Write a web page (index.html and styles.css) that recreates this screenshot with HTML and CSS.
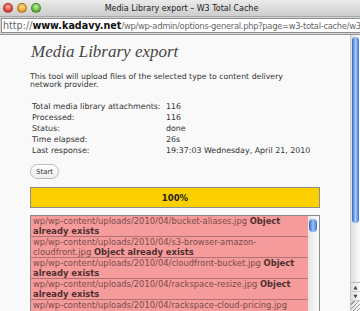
FILE: index.html
```html
<!DOCTYPE html>
<html lang="en">
<head>
  <meta charset="UTF-8">
  <title>Media Library export - W3 Total Cache</title>
  <link rel="stylesheet" href="styles.css">
</head>
<body>
  <div class="window">
    <div class="titlebar">
      <div class="lights">
        <span class="light red"></span>
        <span class="light yellow"></span>
        <span class="light green"></span>
      </div>
      <div class="title">Media Library export – W3 Total Cache</div>
    </div>

    <div class="urlbar">
      <div class="url"><span class="dim">http://</span><b>www.kadavy.net</b><span class="dim path">/wp/wp-admin/options-general.php?page=w3-total-cache/w3-tc</span></div>
    </div>

    <div class="viewport">
      <div class="page">
        <h2>Media Library export</h2>

        <p class="intro">This tool will upload files of the selected type to content delivery network provider.</p>

        <table class="stats">
          <tr><td>Total media library attachments:</td><td>116</td></tr>
          <tr><td>Processed:</td><td>116</td></tr>
          <tr><td>Status:</td><td>done</td></tr>
          <tr><td>Time elapsed:</td><td>26s</td></tr>
          <tr><td>Last response:</td><td>19:37:03 Wednesday, April 21, 2010</td></tr>
        </table>

        <button class="start">Start</button>

        <div class="progress"><span>100%</span></div>

        <div class="log">
          <div class="log-items">
            <div class="log-item">wp/wp-content/uploads/2010/04/bucket-aliases.jpg <b>Object already exists</b></div>
            <div class="log-item">wp/wp-content/uploads/2010/04/s3-browser-amazon-cloudfront.jpg <b>Object already exists</b></div>
            <div class="log-item">wp/wp-content/uploads/2010/04/cloudfront-bucket.jpg <b>Object already exists</b></div>
            <div class="log-item">wp/wp-content/uploads/2010/04/rackspace-resize.jpg <b>Object already exists</b></div>
            <div class="log-item">wp/wp-content/uploads/2010/04/rackspace-cloud-pricing.jpg <b>Object already exists</b></div>
          </div>
          <div class="log-scroll"><span class="mini-thumb"></span></div>
        </div>
      </div>

      <div class="vscroll">
        <div class="track"><span class="thumb"></span></div>
        <div class="arrows">
          <span class="arrow">&#9650;</span>
          <span class="arrow">&#9660;</span>
        </div>
        <div class="grip"></div>
      </div>
    </div>
  </div>
</body>
</html>
```

FILE: styles.css
```css
body {
  margin: 0;
  overflow: hidden;
  font-family: 'DejaVu Sans', Verdana, sans-serif;
  background: #f9f9f9;
}

.window {
  width: 360px;
  height: 311px;
  display: flex;
  flex-direction: column;
  overflow: hidden;
}

.titlebar {
  height: 16px;
  display: flex;
  align-items: center;
  background: linear-gradient(#ebebeb, #cdcdcd);
  border-bottom: 1px solid #a8a8a8;
}

.lights {
  display: flex;
  gap: 4px;
  padding-left: 3px;
}

.light {
  width: 8px;
  height: 8px;
  border-radius: 50%;
  border: 1px solid rgba(0, 0, 0, 0.25);
}

.red { background: radial-gradient(circle at 50% 35%, #ffb3a8, #e0443a 60%, #b02c24); }
.yellow { background: radial-gradient(circle at 50% 35%, #ffe0a0, #e9a22a 60%, #b97a12); }
.green { background: radial-gradient(circle at 50% 35%, #c8f3a8, #5fb83a 60%, #3a8a22); }

.title {
  flex: 1;
  text-align: center;
  font-size: 8px;
  color: #222;
  margin-right: 38px;
}

.urlbar {
  height: 16px;
  padding: 1px 0 0 1px;
  background: #d4d4d4;
}

.url {
  height: 13px;
  background: #fff;
  border: 1px solid #8e8e8e;
  border-right: none;
  font-size: 9.6px;
  line-height: 13px;
  padding-left: 1px;
  white-space: nowrap;
  overflow: hidden;
  color: #111;
}

.url .dim {
  color: #666;
}

.url .path {
  font-size: 8.4px;
  letter-spacing: -0.3px;
}

.viewport {
  flex: 1;
  display: flex;
  border-top: 1px solid #9a9a9a;
  min-height: 0;
}

.page {
  flex: 1;
  padding: 0 30px;
  overflow: hidden;
  color: #333;
}

h2 {
  font-family: 'Liberation Serif', 'DejaVu Serif', serif;
  font-style: italic;
  font-weight: normal;
  font-size: 17px;
  line-height: 20px;
  margin: 7px 0 0 1px;
  color: #464646;
}

.intro {
  font-size: 7.8px;
  line-height: 8px;
  margin: 11px 0 0;
  color: #333;
  width: 262px;
}

.stats {
  border-collapse: collapse;
  margin: 12px 0 0 2px;
  font-size: 7.9px;
  color: #333;
}

.stats td {
  padding: 0;
  height: 11px;
  line-height: 11px;
  white-space: nowrap;
}

.stats td:first-child {
  width: 134px;
}

.start {
  display: block;
  margin-top: 8px;
  height: 15px;
  padding: 0 5px;
  border: 1px solid #bbb;
  border-radius: 8px;
  background: linear-gradient(#fff, #eee);
  font-family: 'DejaVu Sans', sans-serif;
  font-size: 7px;
  color: #333;
}

.progress {
  margin-top: 8px;
  height: 19px;
  background: #fccf00;
  border: 1px solid #8c8c8c;
  display: flex;
  align-items: center;
  justify-content: center;
  font-size: 8.5px;
  font-weight: bold;
  color: #222;
}

.log {
  margin-top: 7px;
  display: flex;
  border: 1px solid #8c8c8c;
  background: #fff;
  height: 120px;
}

.log-items {
  flex: 1;
}

.log-item {
  background: #f59b9b;
  border-bottom: 1px solid #b07272;
  padding: 0 2px;
  font-size: 8.4px;
  line-height: 10px;
  color: #7a4c4c;
}

.log-item b {
  color: #4e3030;
}

.log-scroll {
  width: 11px;
  background: linear-gradient(90deg, #e6e6e6, #fafafa);
  position: relative;
}

.mini-thumb {
  position: absolute;
  left: 1px;
  top: 3px;
  width: 8px;
  height: 13px;
  border-radius: 4px;
  background: linear-gradient(90deg, #2d63c8, #9fc3f5 50%, #3c74d6);
}

.vscroll {
  width: 9px;
  display: flex;
  flex-direction: column;
  background: linear-gradient(90deg, #dedede, #fbfbfb);
  border-left: 1px solid #c8c8c8;
}

.track {
  flex: 1;
  position: relative;
}

.thumb {
  position: absolute;
  left: 1px;
  top: 2px;
  width: 7px;
  height: 186px;
  border-radius: 4px;
  background: linear-gradient(90deg, #2d63c8, #a9c9f6 50%, #3c74d6);
}

.arrows {
  display: flex;
  flex-direction: column;
  border-top: 1px solid #bbb;
}

.arrow {
  height: 8px;
  font-size: 5px;
  line-height: 8px;
  text-align: center;
  color: #444;
  border-bottom: 1px solid #ccc;
}

.grip {
  height: 10px;
  background: repeating-linear-gradient(135deg, transparent 0 2px, #999 2px 3px);
}
```
